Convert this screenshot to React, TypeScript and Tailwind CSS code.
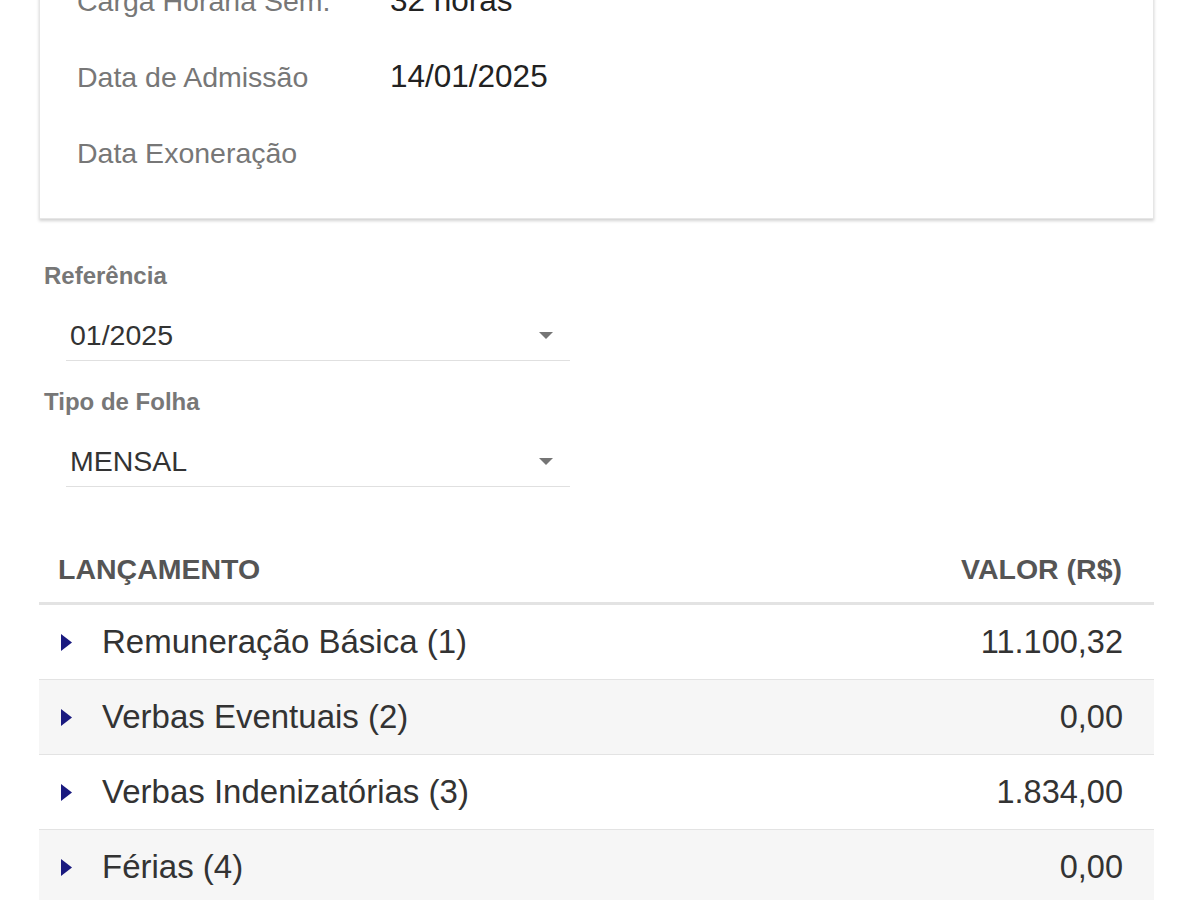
const font = { fontFamily: '"Liberation Sans", Arial, sans-serif' };

const infoRows = [
  { label: 'Carga Horária Sem.', value: '32 horas' },
  { label: 'Data de Admissão', value: '14/01/2025' },
  { label: 'Data Exoneração', value: '' },
];

const lancamentos = [
  { nome: 'Remuneração Básica (1)', valor: '11.100,32' },
  { nome: 'Verbas Eventuais (2)', valor: '0,00' },
  { nome: 'Verbas Indenizatórias (3)', valor: '1.834,00' },
  { nome: 'Férias (4)', valor: '0,00' },
];

function Caret() {
  return (
    <svg width="11" height="17" viewBox="0 0 11 17" className="shrink-0">
      <path d="M0 0 L11 8.5 L0 17 Z" fill="#1a1a80" />
    </svg>
  );
}

function SelectField({ label, value }: { label: string; value: string }) {
  return (
    <div className="flex flex-col">
      <span className="text-[24px] leading-[28px] font-bold text-[#777] pl-[5px]">{label}</span>
      <div className="ml-[27px] w-[504px] mt-[20px] flex items-center justify-between h-[51px] border-b border-[#e0e0e0] pl-[4px] pr-[17px]">
        <span className="text-[28.5px] text-[#333]">{value}</span>
        <svg width="14" height="7" viewBox="0 0 14 7">
          <path d="M0 0 L14 0 L7 7 Z" fill="#757575" />
        </svg>
      </div>
    </div>
  );
}

export default function App() {
  return (
    <div className="w-[1200px] h-[900px] overflow-hidden bg-white" style={font}>
      <div className="ml-[39px] w-[1115px]">
        {/* Card dados funcionais */}
        <div className="-mt-[60px] bg-white border border-[#e6e6e6] shadow-[0_2px_3px_rgba(0,0,0,0.18)] pt-[22px] pb-[27px] pl-[37px]">
          {infoRows.map(r => (
            <div key={r.label} className="flex items-center h-[76px]">
              <span className="w-[313px] text-[28.5px] text-[#777]">{r.label}</span>
              <span className="text-[31.5px] text-[#222]">{r.value}</span>
            </div>
          ))}
        </div>

        {/* Filtros */}
        <div className="mt-[43px] flex flex-col gap-[27px]">
          <SelectField label="Referência" value="01/2025" />
          <SelectField label="Tipo de Folha" value="MENSAL" />
        </div>

        {/* Tabela */}
        <div className="mt-[49px]">
          <div className="flex items-center justify-between h-[69px] pl-[19px] pr-[32px] border-b-[3px] border-[#e3e3e3]">
            <span className="text-[28.5px] font-bold text-[#555]">LANÇAMENTO</span>
            <span className="text-[28.5px] font-bold text-[#555]">VALOR (R$)</span>
          </div>
          {lancamentos.map((l, i) => (
            <div
              key={l.nome}
              className={`flex items-center justify-between h-[75px] border-b border-[#e3e3e3] pl-[22px] pr-[31px] ${i % 2 === 1 ? 'bg-[#f6f6f6]' : 'bg-white'}`}
            >
              <div className="flex items-center gap-[30px]">
                <Caret />
                <span className="text-[33px] text-[#333]">{l.nome}</span>
              </div>
              <span className="text-[32.5px] text-[#333]">{l.valor}</span>
            </div>
          ))}
        </div>
      </div>
    </div>
  );
}
